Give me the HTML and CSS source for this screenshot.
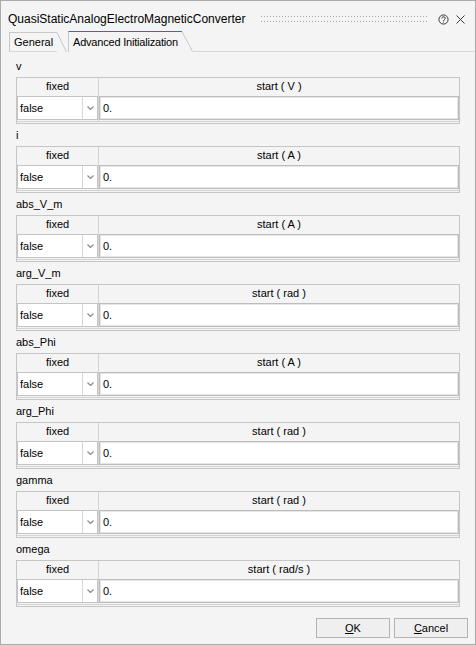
FILE: index.html
```
<!DOCTYPE html>
<html>
<head>
<meta charset="utf-8">
<link rel="stylesheet" href="styles.css">
</head>
<body>
<div class="window">
  <div class="titlebar">
    <span class="title">QuasiStaticAnalogElectroMagneticConverter</span>
    <span class="grip"></span>
    <svg class="help" width="11" height="11" viewBox="0 0 11 11"><circle cx="5.5" cy="5.5" r="4.6" fill="none" stroke="#3a3a3a" stroke-width="1"/><path d="M3.9 4.4a1.65 1.65 0 1 1 2.4 1.45c-0.5 0.3-0.8 0.55-0.8 1.2" fill="none" stroke="#3a3a3a" stroke-width="1"/><rect x="5" y="7.6" width="1" height="1" fill="#3a3a3a"/></svg>
    <svg class="close" width="9" height="9" viewBox="0 0 9 9"><path d="M0.5 0.5L8.5 8.5M8.5 0.5L0.5 8.5" stroke="#3a3a3a" stroke-width="1"/></svg>
  </div>
  <div class="tabs">
    <div class="tab tab-general"><span class="lbl">General</span><svg class="slant" width="10" height="20" viewBox="0 0 10 20"><path d="M0 0.5L9.5 20" stroke="#c8c8c8" stroke-width="1" fill="none"/></svg></div>
    <div class="tab tab-active"><span class="lbl">Advanced Initialization</span><svg class="slant" width="11" height="21" viewBox="0 0 11 21"><path d="M0 0.5L10.5 20.5" stroke="#c8c8c8" stroke-width="1" fill="none"/></svg></div>
    <div class="tabline"></div>
  </div>
  <div class="pane">
    <div class="section"><div class="name">v</div><div class="grid"><div class="hdr"><div class="hc first">fixed</div><div class="hc">start ( V )</div></div><div class="row"><div class="c1"><div class="combo"><span class="val">false</span><span class="arrow"><svg width="7" height="4" viewBox="0 0 7 4"><path d="M0.5 0.5L3.5 3.5L6.5 0.5" fill="none" stroke="#8c8c8c" stroke-width="1.2"/></svg></span></div></div><div class="c2"><div class="input">0.</div></div></div><div class="band"></div></div></div>
    <div class="section"><div class="name">i</div><div class="grid"><div class="hdr"><div class="hc first">fixed</div><div class="hc">start ( A )</div></div><div class="row"><div class="c1"><div class="combo"><span class="val">false</span><span class="arrow"><svg width="7" height="4" viewBox="0 0 7 4"><path d="M0.5 0.5L3.5 3.5L6.5 0.5" fill="none" stroke="#8c8c8c" stroke-width="1.2"/></svg></span></div></div><div class="c2"><div class="input">0.</div></div></div><div class="band"></div></div></div>
    <div class="section"><div class="name">abs_V_m</div><div class="grid"><div class="hdr"><div class="hc first">fixed</div><div class="hc">start ( A )</div></div><div class="row"><div class="c1"><div class="combo"><span class="val">false</span><span class="arrow"><svg width="7" height="4" viewBox="0 0 7 4"><path d="M0.5 0.5L3.5 3.5L6.5 0.5" fill="none" stroke="#8c8c8c" stroke-width="1.2"/></svg></span></div></div><div class="c2"><div class="input">0.</div></div></div><div class="band"></div></div></div>
    <div class="section"><div class="name">arg_V_m</div><div class="grid"><div class="hdr"><div class="hc first">fixed</div><div class="hc">start ( rad )</div></div><div class="row"><div class="c1"><div class="combo"><span class="val">false</span><span class="arrow"><svg width="7" height="4" viewBox="0 0 7 4"><path d="M0.5 0.5L3.5 3.5L6.5 0.5" fill="none" stroke="#8c8c8c" stroke-width="1.2"/></svg></span></div></div><div class="c2"><div class="input">0.</div></div></div><div class="band"></div></div></div>
    <div class="section"><div class="name">abs_Phi</div><div class="grid"><div class="hdr"><div class="hc first">fixed</div><div class="hc">start ( A )</div></div><div class="row"><div class="c1"><div class="combo"><span class="val">false</span><span class="arrow"><svg width="7" height="4" viewBox="0 0 7 4"><path d="M0.5 0.5L3.5 3.5L6.5 0.5" fill="none" stroke="#8c8c8c" stroke-width="1.2"/></svg></span></div></div><div class="c2"><div class="input">0.</div></div></div><div class="band"></div></div></div>
    <div class="section"><div class="name">arg_Phi</div><div class="grid"><div class="hdr"><div class="hc first">fixed</div><div class="hc">start ( rad )</div></div><div class="row"><div class="c1"><div class="combo"><span class="val">false</span><span class="arrow"><svg width="7" height="4" viewBox="0 0 7 4"><path d="M0.5 0.5L3.5 3.5L6.5 0.5" fill="none" stroke="#8c8c8c" stroke-width="1.2"/></svg></span></div></div><div class="c2"><div class="input">0.</div></div></div><div class="band"></div></div></div>
    <div class="section"><div class="name">gamma</div><div class="grid"><div class="hdr"><div class="hc first">fixed</div><div class="hc">start ( rad )</div></div><div class="row"><div class="c1"><div class="combo"><span class="val">false</span><span class="arrow"><svg width="7" height="4" viewBox="0 0 7 4"><path d="M0.5 0.5L3.5 3.5L6.5 0.5" fill="none" stroke="#8c8c8c" stroke-width="1.2"/></svg></span></div></div><div class="c2"><div class="input">0.</div></div></div><div class="band"></div></div></div>
    <div class="section"><div class="name">omega</div><div class="grid"><div class="hdr"><div class="hc first">fixed</div><div class="hc">start ( rad/s )</div></div><div class="row"><div class="c1"><div class="combo"><span class="val">false</span><span class="arrow"><svg width="7" height="4" viewBox="0 0 7 4"><path d="M0.5 0.5L3.5 3.5L6.5 0.5" fill="none" stroke="#8c8c8c" stroke-width="1.2"/></svg></span></div></div><div class="c2"><div class="input">0.</div></div></div><div class="band"></div></div></div>
  </div>
  <div class="buttons">
    <div class="btn"><span class="u">O</span>K</div>
    <div class="btn"><span class="u">C</span>ancel</div>
  </div>
</div>
</body>
</html>
```
FILE: styles.css
```
html, body {
  margin: 0;
  padding: 0;
  background: #f4f4f4;
}
body {
  font-family: "Liberation Sans", Arial, sans-serif;
  font-size: 11px;
  color: #000;
}
.window {
  width: 476px;
  height: 645px;
  box-sizing: border-box;
  border: 1px solid #ababab;
  background: #f4f4f4;
  display: flex;
  flex-direction: column;
}
.titlebar {
  height: 29px;
  box-sizing: border-box;
  padding: 7px 0 0 7px;
  display: flex;
  align-items: center;
}
.title {
  white-space: nowrap;
  font-size: 12px;
}
.grip {
  flex: 1;
  height: 6px;
  margin: 0 9px 0 16px;
  background-image:
    linear-gradient(to right, #a6a6a6 1px, transparent 1px),
    linear-gradient(to right, #a6a6a6 1px, transparent 1px);
  background-size: 3px 1px, 3px 1px;
  background-position: 0 0, 0 100%;
  background-repeat: repeat-x;
}
.help {
  display: block;
  flex: none;
}
.close {
  display: block;
  flex: none;
  margin: 0 10px 0 7px;
}
.tabs {
  height: 22px;
  display: flex;
  align-items: flex-end;
  padding-left: 8px;
}
.tab {
  display: flex;
  align-items: stretch;
}
.tab .lbl {
  box-sizing: border-box;
  border-left: 1px solid #c8c8c8;
  border-top: 1px solid #c8c8c8;
  padding-left: 4px;
  display: flex;
  align-items: center;
  white-space: nowrap;
}
.slant {
  display: block;
  flex: none;
}
.tab-general {
  height: 20px;
}
.tab-general .lbl {
  width: 48px;
  border-bottom: 1px solid #d8d8d8;
}
.tab-active {
  height: 21px;
  margin-left: 1px;
}
.tab-active .lbl {
  width: 114px;
  border-top: 1px solid #1f78b0;
  letter-spacing: -0.2px;
}
.tabline {
  flex: 1;
  height: 1px;
  background: #d8d8d8;
}
.pane {
  flex: 1;
  padding: 6px 0 0 15px;
}
.section {
  height: 69px;
}
.name {
  height: 16px;
  line-height: 16px;
  margin-bottom: 3px;
}
.grid {
  width: 444px;
  height: 47px;
  box-sizing: border-box;
  border: 1px solid #c6c6c6;
}
.hdr {
  display: grid;
  grid-template-columns: 82px 1fr;
  height: 17px;
}
.hc {
  text-align: center;
  line-height: 16px;
}
.hc.first {
  border-right: 1px solid #d4d4d4;
}
.row {
  display: grid;
  grid-template-columns: 82px 1fr;
  height: 26px;
}
.c1 {
  border-right: 1px solid #d4d4d4;
  padding-top: 1px;
}
.combo {
  width: 81px;
  height: 24px;
  box-sizing: border-box;
  border: 1px solid #c4c4c4;
  background: #fff;
  display: flex;
}
.combo .val {
  flex: 1;
  padding-left: 2px;
  line-height: 22px;
  border-right: 1px solid #d6d6d6;
}
.combo .arrow {
  width: 14px;
  display: flex;
  align-items: center;
  justify-content: center;
}
.c2 {
  padding-top: 1px;
}
.input {
  height: 24px;
  width: 360px;
  box-sizing: border-box;
  border: 1px solid #bdbdbd;
  box-shadow: inset 0 0 0 1px #e6e6e6;
  background: #fff;
  padding-left: 3px;
  line-height: 22px;
}
.band {
  height: 2px;
  border-top: 1px solid #d4d4d4;
  box-sizing: border-box;
}
.buttons {
  display: flex;
  justify-content: flex-end;
  gap: 4px;
  padding: 0 7px 6px 0;
}
.btn {
  width: 74px;
  height: 20px;
  box-sizing: border-box;
  border: 1px solid #b3b3b3;
  background: #efefef;
  text-align: center;
  line-height: 18px;
}
.u {
  text-decoration: underline;
}
```
